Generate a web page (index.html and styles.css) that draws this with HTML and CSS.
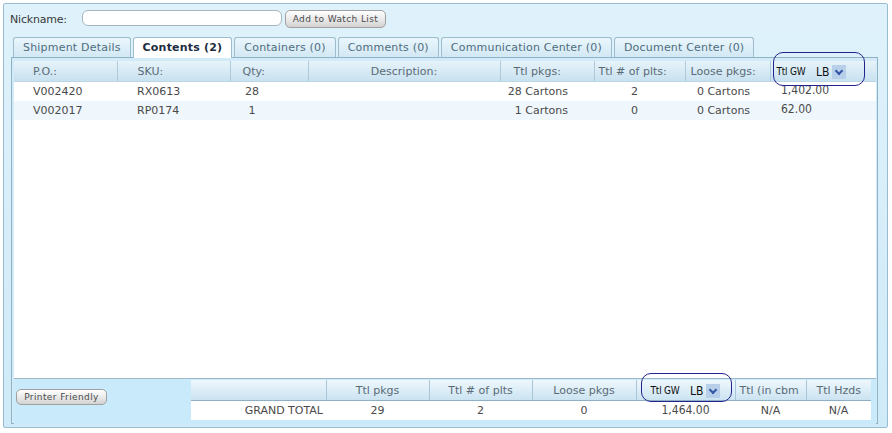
FILE: index.html
```html
<!DOCTYPE html>
<html>
<head>
  <title>Shipment - Contents</title>
  <link rel="stylesheet" href="styles.css">
</head>
<body>
  <div class="panel">
    <div class="toolbar">
      <label class="nick-label">Nickname:</label>
      <input class="nick-input" type="text">
      <button class="btn watch-btn">Add to Watch List</button>
    </div>

    <div class="tabs">
      <div class="tab">Shipment Details</div>
      <div class="tab active">Contents (2)</div>
      <div class="tab">Containers (0)</div>
      <div class="tab">Comments (0)</div>
      <div class="tab">Communication Center (0)</div>
      <div class="tab">Document Center (0)</div>
    </div>

    <div class="tab-body">
      <div class="grid">
        <table class="items">
          <colgroup>
            <col style="width:103px">
            <col style="width:113px">
            <col style="width:78px">
            <col style="width:192px">
            <col style="width:94px">
            <col style="width:91px">
            <col style="width:85px">
            <col>
          </colgroup>
          <thead>
            <tr>
              <th class="c-po">P.O.:</th>
              <th class="c-sku">SKU:</th>
              <th class="c-qty">Qty:</th>
              <th class="c-desc">Description:</th>
              <th class="c-pkgs">Ttl pkgs:</th>
              <th class="c-plts">Ttl # of plts:</th>
              <th class="c-loose">Loose pkgs:</th>
              <th class="c-gw">
                <span class="gw-label">Ttl GW</span>
                <span class="unit">LB<span class="arrow"></span></span>
              </th>
            </tr>
          </thead>
          <tbody>
            <tr>
              <td class="c-po">V002420</td>
              <td class="c-sku">RX0613</td>
              <td class="c-qty">28</td>
              <td></td>
              <td class="c-pkgs">28 Cartons</td>
              <td class="c-plts">2</td>
              <td class="c-loose">0 Cartons</td>
              <td class="c-gw num">1,402.00</td>
            </tr>
            <tr class="alt">
              <td class="c-po">V002017</td>
              <td class="c-sku">RP0174</td>
              <td class="c-qty">1</td>
              <td></td>
              <td class="c-pkgs">1 Cartons</td>
              <td class="c-plts">0</td>
              <td class="c-loose">0 Cartons</td>
              <td class="c-gw num">62.00</td>
            </tr>
          </tbody>
        </table>
      </div>

      <div class="footer">
        <button class="btn print-btn">Printer Friendly</button>
        <table class="totals">
          <colgroup>
            <col style="width:135px">
            <col style="width:103px">
            <col style="width:103px">
            <col style="width:104px">
            <col style="width:99px">
            <col style="width:71px">
            <col>
          </colgroup>
          <thead>
            <tr>
              <th></th>
              <th>Ttl pkgs</th>
              <th>Ttl # of plts</th>
              <th>Loose pkgs</th>
              <th>
                <span class="gw-label">Ttl GW</span>
                <span class="unit">LB<span class="arrow"></span></span>
              </th>
              <th class="cut">Ttl (in cbm</th>
              <th>Ttl Hzds</th>
            </tr>
          </thead>
          <tbody>
            <tr>
              <td class="grand">GRAND TOTAL</td>
              <td>29</td>
              <td>2</td>
              <td>0</td>
              <td class="num">1,464.00</td>
              <td>N/A</td>
              <td>N/A</td>
            </tr>
          </tbody>
        </table>
      </div>
    </div>

    <!-- hand-drawn highlight marks -->
    <div class="mark mark-top"></div>
    <div class="mark mark-bottom"></div>
  </div>
</body>
</html>
```

FILE: styles.css
```css
body {
  margin: 0;
  background: #fff;
  font-family: "DejaVu Sans", Verdana, sans-serif;
  font-size: 11px;
  color: #444;
}

.panel {
  position: relative;
  margin: 3px 0 0 3px;
  width: 883px;
  height: 423px;
  border: 1px solid #98bdd0;
  border-radius: 2px;
  background: linear-gradient(#dff2fb, #cfeaf8);
}

/* nickname bar */
.toolbar {
  display: flex;
  align-items: center;
  height: 18px;
  margin-top: 6px;
  padding-left: 6px;
}

.nick-label {
  width: 72px;
  color: #3a3a3a;
  letter-spacing: -0.2px;
}

.nick-input {
  box-sizing: border-box;
  width: 200px;
  height: 16px;
  margin: 0 3px 2px 0;
  border: 1px solid #a4b6c0;
  border-radius: 6px;
  background: #fff;
}

.btn {
  box-sizing: border-box;
  height: 18px;
  padding: 0;
  border: 1px solid #a0a0a0;
  border-radius: 5px;
  background: linear-gradient(#ffffff, #e8e8e8 55%, #d2d2d2);
  font-family: "DejaVu Sans", Verdana, sans-serif;
  font-size: 9px;
  letter-spacing: 0.4px;
  color: #4a4a4a;
  cursor: pointer;
}

.watch-btn {
  width: 101px;
}

/* tabs */
.tabs {
  display: flex;
  gap: 2px;
  margin: 9px 0 0 9px;
  height: 20px;
}

.tab {
  box-sizing: border-box;
  height: 20px;
  padding: 0 9px;
  border: 1px solid #9dbccd;
  border-bottom: none;
  border-radius: 3px 3px 0 0;
  background: linear-gradient(#eaf6fc, #d2e8f4);
  color: #4f6d7e;
  line-height: 19px;
  letter-spacing: 0.2px;
  white-space: nowrap;
}

.tab.active {
  position: relative;
  z-index: 1;
  height: 21px;
  padding: 0 9px;
  background: #fff;
  color: #1d2c42;
  font-weight: bold;
}

.tab-body {
  box-sizing: border-box;
  width: 867px;
  height: 367px;
  margin-left: 7px;
  border: 1px solid #8fb2c5;
  background: #d3ebf8;
  padding: 3px 1px 0 2px;
}

.grid {
  height: 317px;
  background: #fff;
}

table {
  border-collapse: collapse;
  table-layout: fixed;
}

.items {
  width: 862px;
}

.items th {
  height: 20px;
  padding: 0;
  border-right: 1px solid #aecadb;
  border-bottom: 1px solid #bcd6e5;
  background: linear-gradient(#e6f3fa, #c8e1f0);
  color: #5b6b76;
  font-weight: normal;
  line-height: 19px;
  white-space: nowrap;
}

.items th:last-child {
  border-right: none;
}

.items td {
  height: 19px;
  padding: 0;
  color: #4a4a4a;
  line-height: 19px;
  white-space: nowrap;
}

.items tr.alt td {
  background: #eff7fc;
}

.c-po {
  text-align: left;
  padding-left: 19px !important;
}

.c-sku {
  text-align: left;
  padding-left: 20px !important;
}

th.c-qty {
  text-align: left;
  padding-left: 12px !important;
}

td.c-qty {
  text-align: center;
  padding-right: 34px !important;
}

.c-desc {
  text-align: center;
}

th.c-pkgs {
  text-align: left;
  padding-left: 13px !important;
}

td.c-pkgs {
  text-align: right;
  padding-right: 26px !important;
}

th.c-plts {
  text-align: left;
  padding-left: 4px !important;
}

td.c-plts {
  text-align: center;
  padding-right: 10px !important;
}

th.c-loose {
  text-align: left;
  padding-left: 5px !important;
}

td.c-loose {
  text-align: center;
  padding-right: 8px !important;
}

.c-gw {
  text-align: left;
  padding-left: 6px !important;
}

.items td.c-gw {
  padding-left: 11px !important;
  line-height: 16px;
  vertical-align: top;
}

.num {
  font-family: "DejaVu Sans Condensed", "DejaVu Sans", sans-serif;
  font-size: 12px;
  color: #111;
}

.gw-label {
  font-family: "DejaVu Sans Condensed", "DejaVu Sans", sans-serif;
  font-size: 10px;
  color: #111;
  letter-spacing: -0.2px;
}

.unit {
  display: inline-flex;
  align-items: center;
  margin-left: 7px;
  font-family: "DejaVu Sans Condensed", "DejaVu Sans", sans-serif;
  font-size: 12px;
  line-height: 14px;
  color: #111;
  vertical-align: middle;
}

.arrow {
  position: relative;
  width: 14px;
  height: 14px;
  margin-left: 3px;
  background: #b8cfe9;
}

.arrow::after {
  content: "";
  position: absolute;
  left: 4px;
  top: 3px;
  width: 4px;
  height: 4px;
  border-right: 2px solid #3355a5;
  border-bottom: 2px solid #3355a5;
  transform: rotate(45deg);
}

/* bottom totals */
.footer {
  display: flex;
  align-items: flex-start;
  height: 45px;
  border-top: 1px solid #9fb7c6;
  background: #c9eafa;
}

.print-btn {
  width: 91px;
  height: 16px;
  margin: 10px 0 0 2px;
}

.totals {
  width: 680px;
  margin: 1px 0 0 84px;
}

.totals th {
  height: 20px;
  padding: 0;
  border-right: 1px solid #a9c6d8;
  border-bottom: 1px solid #8fb0c4;
  background: linear-gradient(#eef7fc, #cbe3f1);
  color: #5b6b76;
  font-weight: normal;
  line-height: 19px;
  text-align: center;
  white-space: nowrap;
  overflow: hidden;
}

.totals th:last-child {
  border-right: none;
}

.totals th.cut {
  text-align: left;
  padding-left: 4px;
}

.totals td {
  height: 19px;
  padding: 0;
  background: #fff;
  color: #4a4a4a;
  line-height: 19px;
  text-align: center;
  white-space: nowrap;
}

.totals td.grand {
  text-align: right;
  padding-right: 3px;
}

/* highlight marks drawn over the page */
.mark {
  position: absolute;
  box-sizing: border-box;
  border: 1.5px solid #23238f;
  border-radius: 10px;
  pointer-events: none;
}

.mark-top {
  left: 769px;
  top: 48px;
  width: 92px;
  height: 34px;
}

.mark-bottom {
  left: 637px;
  top: 369px;
  width: 91px;
  height: 29px;
}
```
